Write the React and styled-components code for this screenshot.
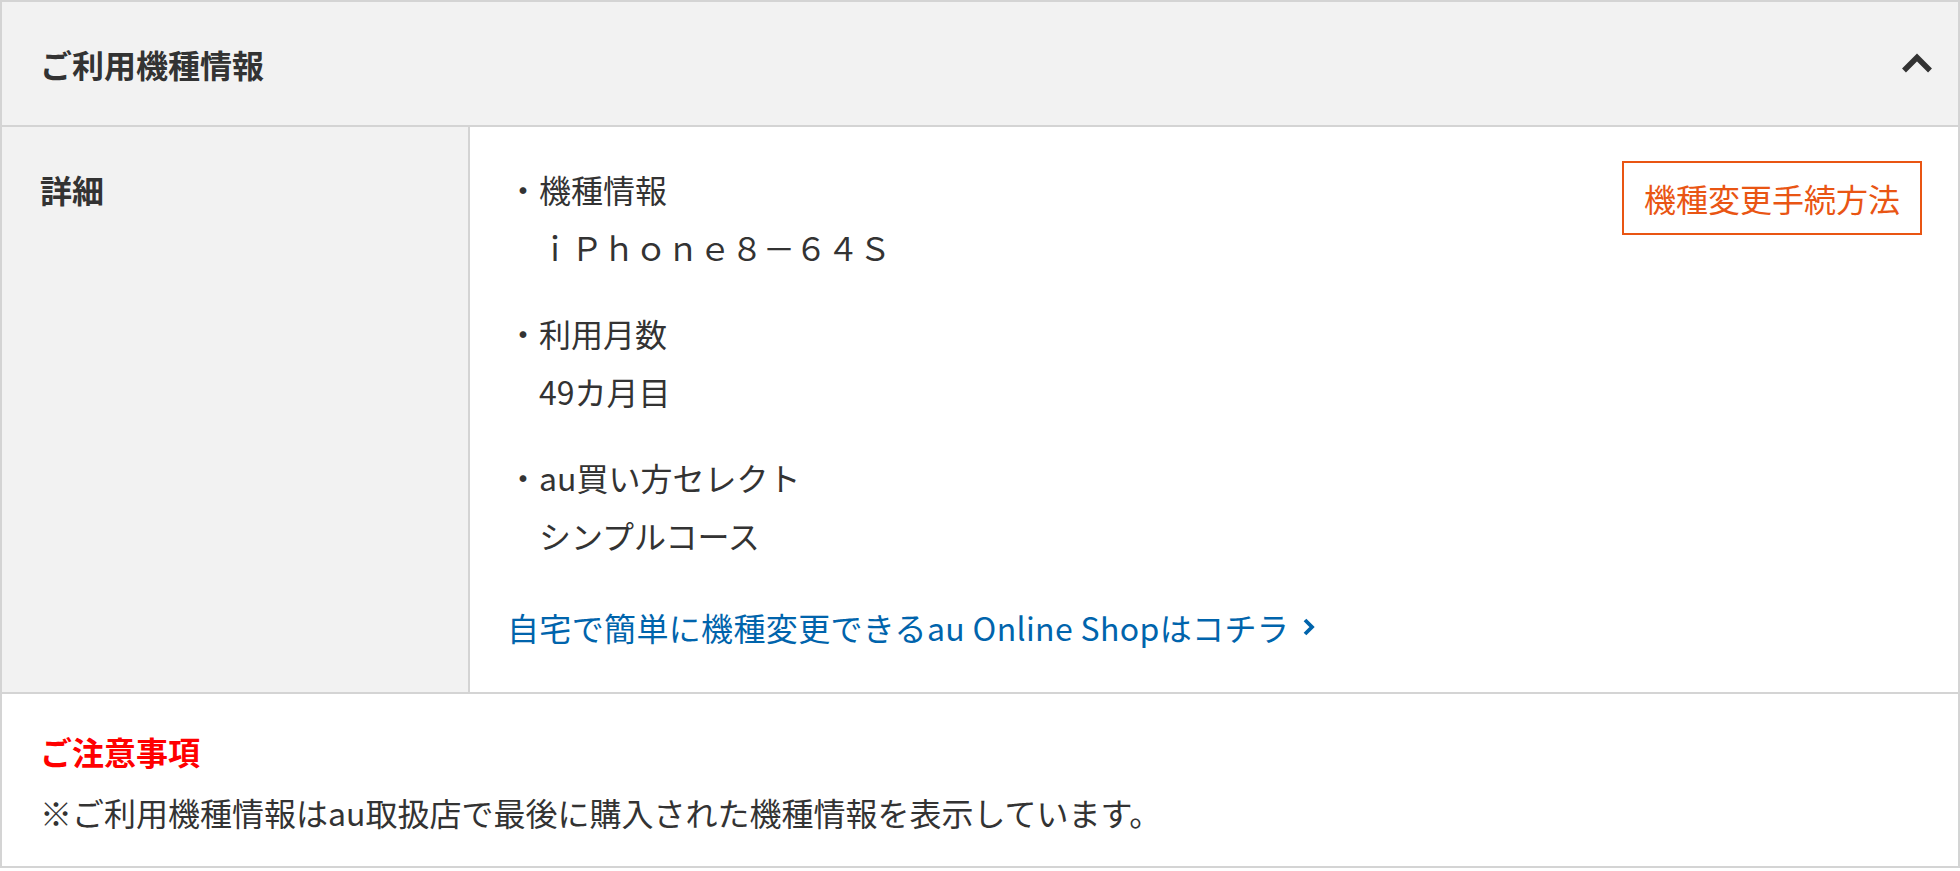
import React from "react";
import styled, { createGlobalStyle } from "styled-components";

const GlobalStyle = createGlobalStyle`
  html, body {
    margin: 0;
    padding: 0;
    background: #fff;
  }
  body {
    font-family: "Noto Sans CJK JP", "Noto Sans", sans-serif;
    color: #333;
  }
  * {
    box-sizing: border-box;
  }
`;

const Panel = styled.section`
  width: 1960px;
  border: 2px solid #d4d4d4;
  background: #fff;
`;

const Header = styled.div`
  height: 125px;
  display: flex;
  align-items: center;
  justify-content: space-between;
  padding: 0 25px 0 38px;
  background: #f2f2f2;
  border-bottom: 2px solid #d4d4d4;

  h2 {
    margin: 0;
    font-size: 32px;
    font-weight: 700;
    color: #333;
  }
`;

const Toggle = styled.button`
  border: 0;
  padding: 0;
  background: transparent;
  display: flex;
  cursor: pointer;
`;

const DetailRow = styled.div`
  display: grid;
  grid-template-columns: 468px 1fr;
  border-bottom: 2px solid #d4d4d4;
`;

const Label = styled.div`
  background: #f2f2f2;
  border-right: 2px solid #d4d4d4;
  padding: 34px 38px;
  font-size: 32px;
  line-height: 1.8;
  font-weight: 700;
`;

const Content = styled.div`
  display: flex;
  justify-content: space-between;
  align-items: flex-start;
  padding: 34px 36px 36px 37px;
`;

const Info = styled.div`
  font-size: 32px;
  line-height: 1.8;
`;

const Item = styled.div`
  margin-bottom: 29px;
`;

const Term = styled.div``;

const Value = styled.div`
  padding-left: 32px;
`;

const ShopLink = styled.a`
  display: inline-flex;
  align-items: center;
  margin-top: 5px;
  color: #0064ac;
  letter-spacing: 0.35px;
  text-decoration: none;
  cursor: pointer;

  svg {
    margin-left: 14px;
  }
`;

const ProcedureButton = styled.a`
  display: inline-block;
  padding: 11px 20px;
  border: 2px solid #e95513;
  color: #e95513;
  font-size: 32px;
  line-height: 1.5;
  text-decoration: none;
  white-space: nowrap;
  cursor: pointer;
`;

const Notes = styled.div`
  padding: 33px 38px 30px;
  font-size: 32px;
  line-height: 1.5;
`;

const NoteTitle = styled.p`
  margin: 0 0 13px;
  color: #ff0000;
  font-weight: 700;
`;

const NoteText = styled.p`
  margin: 0;
`;

const items = [
  { term: "・機種情報", value: "ｉＰｈｏｎｅ８－６４Ｓ" },
  { term: "・利用月数", value: "49カ月目" },
  { term: "・au買い方セレクト", value: "シンプルコース" },
];

const App = () => {
  return (
    <>
      <GlobalStyle />
      <Panel>
        <Header>
          <h2>ご利用機種情報</h2>
          <Toggle aria-label="閉じる">
            <svg width="32" height="21" viewBox="0 0 32 21">
              <polyline
                points="3,17.5 16,4.5 29,17.5"
                fill="none"
                stroke="#333"
                strokeWidth="5.5"
                strokeLinejoin="miter"
              />
            </svg>
          </Toggle>
        </Header>
        <DetailRow>
          <Label>詳細</Label>
          <Content>
            <Info>
              {items.map((it) => (
                <Item key={it.term}>
                  <Term>{it.term}</Term>
                  <Value>{it.value}</Value>
                </Item>
              ))}
              <ShopLink>
                自宅で簡単に機種変更できるau Online Shopはコチラ
                <svg width="12" height="18" viewBox="0 0 12 18">
                  <polyline
                    points="2,2 9,9 2,16"
                    fill="none"
                    stroke="#0064ac"
                    strokeWidth="3.8"
                  />
                </svg>
              </ShopLink>
            </Info>
            <ProcedureButton>機種変更手続方法</ProcedureButton>
          </Content>
        </DetailRow>
        <Notes>
          <NoteTitle>ご注意事項</NoteTitle>
          <NoteText>
            ※ご利用機種情報はau取扱店で最後に購入された機種情報を表示しています。
          </NoteText>
        </Notes>
      </Panel>
    </>
  );
};

export default App;
